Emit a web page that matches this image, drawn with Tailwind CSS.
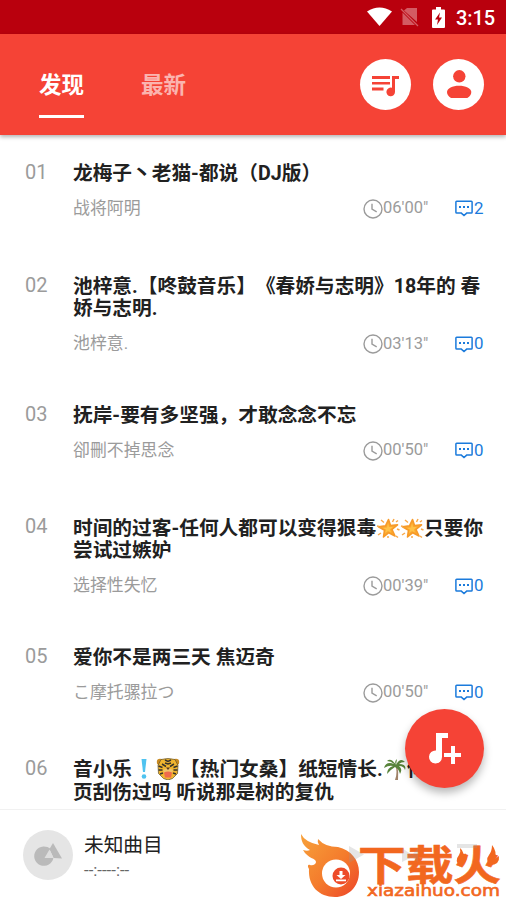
<!DOCTYPE html>
<html lang="zh-CN">
<head>
<meta charset="utf-8">
<title>发现</title>
<script src="https://cdn.jsdelivr.net/npm/@tailwindcss/browser@4"></script>
</head>
<body class="bg-white">
<svg class="hidden">
  <symbol id="clock" viewBox="0 0 20 20"><circle cx="10" cy="10" r="9" fill="none" stroke="#9b9b9b" stroke-width="1.4"/><path d="M9 4.8v5.4l4.7 2.6" fill="none" stroke="#9b9b9b" stroke-width="1.4"/></symbol>
  <symbol id="chat" viewBox="0 0 18 17"><path d="M1.7 1.200h14.600q.8 0 .8.8v10.300q0 .8-.8.8h-4.600L9 15.600l-2.700-2.500H1.700q-.8 0-.8-.8V2q0-.8.8-.8Z" fill="none" stroke="#1b7bdc" stroke-width="1.500"/><path d="M4 6h2v2H4zM8 6h2v2H8zM12 6h2v2h-2z" fill="#1b7bdc"/></symbol>
  <symbol id="star" viewBox="0 0 24 22"><path d="M12.500 2.500l2 6 7-.6-5.500 4.600 3 6.500-6.200-3.300-5.300 4.300 1-6.800-6-3.400 7-.9Z" fill="#fba92f" stroke="#f79a28" stroke-width="1.600" stroke-linejoin="round"/><path d="M12 6l1 4 4 0-3 2.500 1 3-3-1.500-3 2 1-3.500-3-1.500 4-.5Z" fill="#ffc247"/><path d="M5 3l3 2.500M18 2l-1.500 3M1 9l2 .5M2 18l3-2M21 12l2.500 1M20 5l2-1.500M12 19v2M20 19l2 1.500" stroke="#f8a94a" stroke-width="1.500"/></symbol>
</svg>
<div class="relative flex h-[900px] w-[506px] flex-col overflow-hidden bg-white font-['Roboto','Noto_Sans_CJK_SC',sans-serif] [text-spacing-trim:space-all]">
  <div class="flex h-[34px] shrink-0 items-center justify-end bg-[#b9000d] pr-[11px] text-white">
    <svg class="mr-[8px] h-[20px] w-[25px]" viewBox="0 0 25 20"><path d="M0 4.500Q12.500-3.500 25 4.500L12.500 19Z" fill="#fff"/></svg>
    <svg class="mr-[13px] h-[20px] w-[19px]" viewBox="0 0 19 20"><path d="M7 1h10v14L4 3.500ZM2.500 5.500L15 18H2.500Z" fill="#d35b63"/><path d="M1 2l17 17" stroke="#d35b63" stroke-width="1.300"/></svg>
    <svg class="mr-[11px] h-[21px] w-[13px]" viewBox="0 0 13 21"><path d="M1 2.500h3V0h5v2.500h3q1 0 1 1V20q0 1-1 1H1q-1 0-1-1V3.500q0-1 1-1Z" fill="#fff"/><path d="M8 5.500L3 12.500h3L5 18l5-7.500H7Z" fill="#b9000d"/></svg>
    <span class="w-[39px] pt-px text-[20px] font-medium leading-[34px] tracking-[-0.1px]">3:15</span>
  </div>
  <header class="relative z-10 flex h-[101px] shrink-0 bg-[#f54336] pl-[39px] pr-[22px] shadow-[0_2px_4px_rgba(0,0,0,0.3)]">
    <div class="mr-[57px] flex h-[84px] w-[45px] flex-col justify-end border-b-[3px] border-white pb-[13px]"><span class="whitespace-nowrap text-[22.500px] font-bold leading-[33px] text-white">发现</span></div>
    <div class="flex h-[84px] flex-col justify-end pb-[16px]"><span class="whitespace-nowrap text-[22.500px] font-bold leading-[33px] text-[#fbb4af]">最新</span></div>
    <div class="ml-auto flex items-center gap-[22px]">
      <div class="flex size-[51px] items-center justify-center rounded-full bg-white"><svg class="size-[51px]" viewBox="0 0 51 51" fill="#f54336"><path d="M12 17h18v3H12zM12 23h18v2.500H12zM12 28.500h11.500v3H12zM32 17h7v3h-4v13a4.300 4.300 0 1 1-3-4.200Z"/></svg></div>
      <div class="flex size-[51px] items-center justify-center rounded-full bg-white"><svg class="size-[51px]" viewBox="0 0 51 51" fill="#f54336"><circle cx="26.300" cy="17.300" r="6.200"/><path d="M14 33c0-3.800 5.500-6.300 12-6.300S38.300 29.200 38.300 33q0 3.500-4 6H18q-4-2.500-4-6Z"/></svg></div>
    </div>
  </header>
  <main class="flex h-[674px] shrink-0 flex-col overflow-hidden pt-[26px] text-[#212121]">
    <article class="flex h-[113px] shrink-0 pl-[25px] pr-[22px]">
      <span class="w-[48px] shrink-0 text-[20px] leading-[22.500px] text-[#9b9b9b]">01</span>
      <div class="min-w-0 flex-1 pt-[1.500px]"><h2 class="whitespace-nowrap text-[19.700px] font-bold leading-[22.500px]">龙梅子丶老猫-都说（DJ版）</h2>
      <div class="mt-[12.500px] flex h-[22px] items-center text-[16.900px] text-[#9b9b9b]"><span>战将阿明</span><svg class="ml-auto size-5"><use href="#clock"/></svg><span class="w-[72px] text-[16.500px]">06'00"</span><svg class="h-[17px] w-[18px]"><use href="#chat"/></svg><span class="w-[11px] pl-px text-[#1b7bdc]">2</span></div></div>
    </article>
    <article class="flex h-[129px] shrink-0 pl-[25px] pr-[22px]">
      <span class="w-[48px] shrink-0 text-[20px] leading-[22.500px] text-[#9b9b9b]">02</span>
      <div class="min-w-0 flex-1 pt-[1.500px]"><h2 class="whitespace-nowrap text-[19.700px] font-bold leading-[22.500px]">池梓意.【咚鼓音乐】《春娇与志明》18年的 春<br>娇与志明.</h2>
      <div class="mt-[12.500px] flex h-[22px] items-center text-[16.900px] text-[#9b9b9b]"><span>池梓意.</span><svg class="ml-auto size-5"><use href="#clock"/></svg><span class="w-[72px] text-[16.500px]">03'13"</span><svg class="h-[17px] w-[18px]"><use href="#chat"/></svg><span class="w-[11px] pl-px text-[#1b7bdc]">0</span></div></div>
    </article>
    <article class="flex h-[112px] shrink-0 pl-[25px] pr-[22px]">
      <span class="w-[48px] shrink-0 text-[20px] leading-[22.500px] text-[#9b9b9b]">03</span>
      <div class="min-w-0 flex-1 pt-[1.500px]"><h2 class="whitespace-nowrap text-[19.700px] font-bold leading-[22.500px]">抚岸-要有多坚强，才敢念念不忘</h2>
      <div class="mt-[12.500px] flex h-[22px] items-center text-[16.900px] text-[#9b9b9b]"><span>卻刪不掉思念</span><svg class="ml-auto size-5"><use href="#clock"/></svg><span class="w-[72px] text-[16.500px]">00'50"</span><svg class="h-[17px] w-[18px]"><use href="#chat"/></svg><span class="w-[11px] pl-px text-[#1b7bdc]">0</span></div></div>
    </article>
    <article class="flex h-[130px] shrink-0 pl-[25px] pr-[22px]">
      <span class="w-[48px] shrink-0 text-[20px] leading-[22.500px] text-[#9b9b9b]">04</span>
      <div class="min-w-0 flex-1 pt-[1.500px]"><h2 class="whitespace-nowrap text-[19.700px] font-bold leading-[22.500px]">时间的过客-任何人都可以变得狠毒<svg class="inline-block h-[22px] w-[24px] align-[-4px]"><use href="#star"/></svg><svg class="inline-block h-[22px] w-[24px] align-[-4px]"><use href="#star"/></svg>只要你<br>尝试过嫉妒</h2>
      <div class="mt-[12.500px] flex h-[22px] items-center text-[16.900px] text-[#9b9b9b]"><span>选择性失忆</span><svg class="ml-auto size-5"><use href="#clock"/></svg><span class="w-[72px] text-[16.500px]">00'39"</span><svg class="h-[17px] w-[18px]"><use href="#chat"/></svg><span class="w-[11px] pl-px text-[#1b7bdc]">0</span></div></div>
    </article>
    <article class="flex h-[112px] shrink-0 pl-[25px] pr-[22px]">
      <span class="w-[48px] shrink-0 text-[20px] leading-[22.500px] text-[#9b9b9b]">05</span>
      <div class="min-w-0 flex-1 pt-[1.500px]"><h2 class="whitespace-nowrap text-[19.700px] font-bold leading-[22.500px]">爱你不是两三天 焦迈奇</h2>
      <div class="mt-[12.500px] flex h-[22px] items-center text-[16.900px] text-[#9b9b9b]"><span>こ摩托骡拉つ</span><svg class="ml-auto size-5"><use href="#clock"/></svg><span class="w-[72px] text-[16.500px]">00'50"</span><svg class="h-[17px] w-[18px]"><use href="#chat"/></svg><span class="w-[11px] pl-px text-[#1b7bdc]">0</span></div></div>
    </article>
    <article class="flex h-[52px] shrink-0 pl-[25px] pr-[22px]">
      <span class="w-[48px] shrink-0 text-[20px] leading-[22.500px] text-[#9b9b9b]">06</span>
      <h2 class="whitespace-nowrap pt-px text-[19.700px] font-bold leading-[22.500px]">音小乐<svg class="inline-block h-[22px] w-[24px] align-[-4px]" viewBox="0 0 24 22"><path d="M9.500 1h5l-1.500 13h-2z" fill="#4fc3f0"/><circle cx="12" cy="18.500" r="2.300" fill="#4fc3f0"/></svg><svg class="inline-block h-[22px] w-[24px] align-[-4px]" viewBox="0 0 24 22"><circle cx="4" cy="4" r="3.200" fill="#c88a22"/><circle cx="20" cy="4" r="3.200" fill="#c88a22"/><path d="M5 1.500q7-2 14 0l3 6-.5 8-5 5-4.500 1.500L7.500 20.500l-5-5L2 7.500Z" fill="#f0b52f" stroke="#60502c" stroke-width=".7"/><path d="M9 2l3 1.500L15 2M9 5l3 1 3-1M2.500 8l4 1.500M21.500 8l-4 1.500M2.500 12l4 0M21.500 12l-4 0M4 16l3-1M20 16l-3-1M6 6l4 2.500M18 6l-4 2.500" fill="none" stroke="#37332b" stroke-width="1.500"/><path d="M7 12l4-2h2l4 2-1 3H8Z" fill="#f0c46a"/><path d="M10 9.500h4L12 12Z" fill="#553826"/><path d="M8 14.500q4-2 8 0l-1 5H9Z" fill="#ef6a4c"/></svg>【热门女桑】纸短情长.<svg class="inline-block h-[22px] w-[24px] align-[-4px]" viewBox="0 0 24 22"><path d="M12 7q3 7 0 15h3q1-8-1-15Z" fill="#a08268"/><path d="M13 7Q8-1 4 3q4 0 7 3Q3 3 1 10q5-3 9-2-6 2-6 8 3-4 8-7 4 2 5 7 3-5-1-8 5 0 6 4 2-6-6-6 2-2 6-2-5-5-9 3l1-6q-3 2-1 6Z" fill="#58843b"/></svg>何<br>页刮伤过吗 听说那是树的复仇</h2>
    </article>
  </main>
  <footer class="flex h-[91px] shrink-0 items-center border-t border-[#f1f1f1] bg-white pl-[23px]">
    <svg class="size-[50px] shrink-0" viewBox="0 0 50 50"><circle cx="25" cy="25" r="25" fill="#e5e5e5"/><path d="M28 19.500A9.700 9.700 0 1 0 30.500 27.500L22 28Z" fill="#bababa"/><path d="M30 13l9 15.500-8.500-.5L26.500 19Z" fill="#bababa"/><path d="M21.500 28l5-8.500 4 8.500Z" fill="#dedede"/></svg>
    <div class="ml-[11px] flex flex-col pt-[3px]"><span class="text-[19.700px] leading-[26px] text-[#212121]">未知曲目</span><span class="h-[22px] text-[16.800px] leading-[22px] text-[#666666]">--:----:--</span></div>
  </footer>
  <button class="absolute left-[405px] top-[709px] z-20 size-[79px] rounded-full bg-[#f54336] shadow-[0_5px_9px_rgba(0,0,0,0.28)]"><svg class="size-full" viewBox="0 0 79 79" fill="#fff"><path d="M31 24h12v5h-6v19a6.500 6.500 0 1 1-6-6.500ZM46 37h4v7h6v4h-6v7h-4v-7h-7v-4h7Z"/></svg></button>
  <svg class="absolute left-[290px] top-[820px] z-30 h-[80px] w-[216px]" viewBox="0 0 216 80">
    <defs><linearGradient id="flame" x1="0" y1="0" x2="1" y2="1"><stop offset="0" stop-color="#f7a13a"/><stop offset=".55" stop-color="#f47b2c"/><stop offset="1" stop-color="#ed4429"/></linearGradient></defs>
    <path d="M11 14q4 8 18 11-2-3-1-6 7 8 20 8c13 3 21 13 21 25 0 15-11 25-24 25-16 0-27-11-26-28-2-3-1-5 1-4 3 1 6-1 6-3 0-4-8-3-13-12 3 1 5 1 7 0-7-4-9-9-9-16Z" fill="url(#flame)"/>
    <circle cx="46" cy="53.500" r="14" fill="#fff"/><circle cx="51" cy="56" r="8.500" fill="#ed4b29"/>
    <path d="M49.500 51h3v4h3L51 59l-4.500-4h3ZM46 59.500h10v1.700H46z" fill="#fff"/>
    <text x="68" y="59.500" textLength="143" lengthAdjust="spacingAndGlyphs" font-family="Noto Sans CJK SC, sans-serif" font-weight="700" font-size="41" fill="#f2671f" stroke="#f2671f" stroke-width=".6">下载火</text>
    <path d="M170 46q-6-5-1-11 2-3 1-7 5 4 2 10 3-2 3-5 5 8-5 13ZM200 45q10 0 9-9l-4 3q2-8-3-14 0 6-3 10-4 5 1 10Z" fill="#f2671f"/>
    <text x="77" y="75.500" textLength="133" lengthAdjust="spacingAndGlyphs" font-family="DejaVu Sans, sans-serif" font-size="15" fill="#f2671f" stroke="#f2671f" stroke-width=".6">xiazaihuo.com</text>
    <path d="M59 26l15 8.500L59 43ZM112 28l10 7 6-7v14l-6-5-10 5ZM167 24h20v4h-20z" fill="#999" opacity=".25"/>
  </svg>
</div>
</body>
</html>
